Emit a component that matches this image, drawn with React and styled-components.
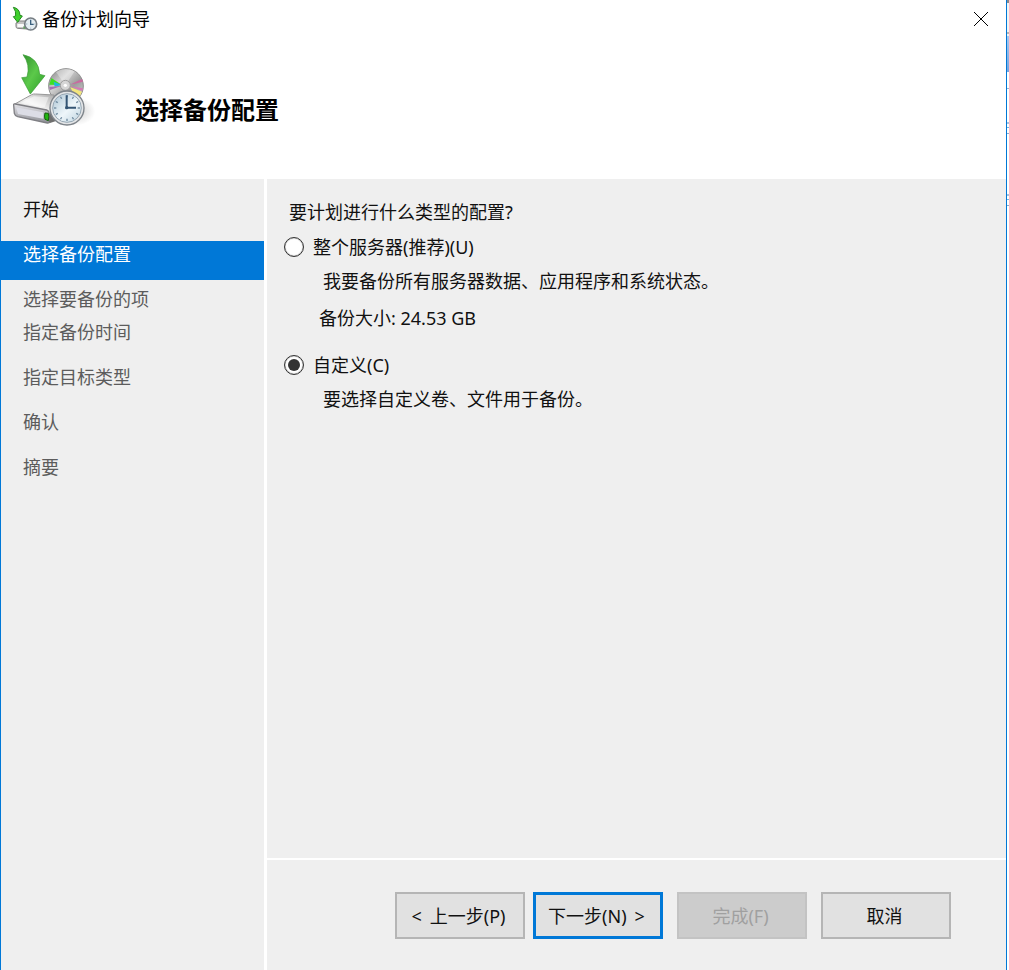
import React, { useState } from 'react';
import styled, { createGlobalStyle, css } from 'styled-components';

const GlobalStyle = createGlobalStyle`
  :root {
    --accent: #0078d7;
    --panel: #efefef;
    --ink: #111;
    --muted: #5c5c5c;
    --font: 'Noto Sans', 'Noto Sans CJK SC', sans-serif;
  }

  *,
  *::before,
  *::after {
    box-sizing: border-box;
  }

  body {
    margin: 0;
    background: #fff;
    color: var(--ink);
    font-family: var(--font);
    font-size: 18px;
    line-height: 24px;
  }
`;

const Desktop = styled.div`
  display: flex;
  min-height: 100vh;
`;

// Sliver of the window behind the wizard
const Backdrop = styled.div`
  width: 2px;
  background: linear-gradient(
    #8a8a8a 0 3px,
    #f3f3f3 3px 32px,
    #b4b4b4 32px 34px,
    #f3f3f3 34px 36px,
    #a9c8ef 36px,
    #77a5e0 72px,
    #fff 72px 88px,
    #9db4cf 88px 89px,
    #fff 89px 122px,
    #a9c2de 122px 124px,
    #fff 124px 127px,
    #79b4dc 127px 128px,
    #fff 128px 133px,
    #8ba9cc 133px 134px,
    #fff 134px 194px,
    #a9c2de 194px 196px,
    #fff 196px 199px,
    #79b4dc 199px 200px,
    #fff 200px 205px,
    #8ba9cc 205px 206px,
    #fff 206px
  );
`;

const Window = styled.div`
  display: flex;
  flex: 1;
  flex-direction: column;
  border: solid var(--accent);
  border-width: 0 1px;
`;

const TitleBar = styled.div`
  display: flex;
  align-items: center;
  gap: 4px;
  height: 37px;
  padding: 0 16px 0 11px;
  color: #000;
`;

const TitleText = styled.span`
  flex: 1;
`;

const CloseButton = styled.button`
  display: flex;
  padding: 0;
  border: 0;
  background: none;
  color: #000;
`;

const Header = styled.header`
  display: flex;
  align-items: flex-start;
  gap: 39px;
  height: 142px;
  padding: 15px 11px 0;

  h1 {
    margin: 40px 0 0;
    color: #000;
    font-size: 24px;
    font-weight: 700;
    line-height: 36px;
  }
`;

const Body = styled.div`
  display: flex;
  flex: 1;
  gap: 3px;
`;

const Sidebar = styled.nav`
  flex: 0 0 263px;
  padding-top: 17px;
  background: var(--panel);

  ul {
    display: flex;
    flex-direction: column;
    gap: 6px;
    margin: 0;
    padding: 0;
    list-style: none;
  }
`;

const Step = styled.a`
  display: block;
  padding: 1px 22px ${({ $tight }) => ($tight ? '2px' : '14px')};
  color: ${({ $state }) => ($state === 'done' ? 'var(--ink)' : 'var(--muted)')};
  text-decoration: none;

  ${({ $state }) =>
    $state === 'current' &&
    css`
      background: var(--accent);
      color: #fff;
    `}
`;

const Main = styled.main`
  display: flex;
  flex: 1;
  flex-direction: column;
  background: var(--panel);
`;

const Options = styled.fieldset`
  flex: 1;
  min-width: 0;
  margin: 0;
  padding: 21px 17px 0;
  border: 0;

  legend {
    float: left;
    width: 100%;
    margin-bottom: 11px;
    padding: 0 5px;
  }
`;

const Option = styled.div`
  clear: both;
  margin-bottom: 23px;

  label {
    display: flex;
    align-items: center;
    gap: 9px;
  }

  p {
    margin: 10px 0 0;
    padding-left: 39px;
  }

  p + p {
    margin-top: 13px;
    padding-left: 35px;
  }
`;

const Radio = styled.input`
  display: grid;
  place-content: center;
  width: 20px;
  height: 20px;
  margin: 0;
  border: 1px solid #333;
  border-radius: 50%;
  background: #fff;
  box-shadow: inset 0 0 1px #333;
  appearance: none;

  &:checked::before {
    width: 12px;
    height: 12px;
    border-radius: 50%;
    background: #333;
    content: '';
  }
`;

const Footer = styled.footer`
  display: flex;
  justify-content: flex-end;
  gap: 14px;
  padding: 32px 55px 31px 16px;
  border-top: 2px solid #fff;
`;

const Button = styled.button`
  display: flex;
  align-items: center;
  justify-content: center;
  gap: 8px;
  width: 130px;
  height: 47px;
  padding: 0 3px 0 0;
  border: ${({ $primary }) => ($primary ? '3px solid var(--accent)' : '2px solid #b5b5b5')};
  background: #e1e1e1;
  color: var(--ink);
  font: inherit;

  &:first-child {
    margin-right: -6px;
  }

  &:disabled {
    border-color: #c3c3c3;
    background: #ccc;
    color: #a0a0a0;
  }
`;

const BackupIcon = () => (
  <svg width="84" height="76" viewBox="38 38 252 228" aria-hidden="true">
    <defs>
      <linearGradient id="arrow" x1="0" y1="0" x2="1" y2="1">
        <stop offset="0" stopColor="#2f8f2c" />
        <stop offset="0.5" stopColor="#5cc94a" />
        <stop offset="1" stopColor="#2b9c28" />
      </linearGradient>
      <linearGradient id="disc" x1="0" y1="0" x2="1" y2="1">
        <stop offset="0" stopColor="#7c7c7c" />
        <stop offset="0.35" stopColor="#d2d2d2" />
        <stop offset="0.6" stopColor="#9c9c9c" />
        <stop offset="1" stopColor="#dcdcdc" />
      </linearGradient>
      <linearGradient id="driveTop" x1="0" y1="1" x2="1" y2="0">
        <stop offset="0" stopColor="#c0c0c0" />
        <stop offset="0.5" stopColor="#f2f2f2" />
        <stop offset="1" stopColor="#aaa" />
      </linearGradient>
      <linearGradient id="driveFront" x1="0" y1="0" x2="0" y2="1">
        <stop offset="0" stopColor="#e4e4e8" />
        <stop offset="1" stopColor="#8e8f96" />
      </linearGradient>
      <linearGradient id="face" x1="0" y1="0" x2="1" y2="1">
        <stop offset="0" stopColor="#aac3d3" />
        <stop offset="0.55" stopColor="#eef6fa" />
        <stop offset="1" stopColor="#bed3df" />
      </linearGradient>
      <radialGradient id="shade">
        <stop offset="0" stopColor="#bbb" stopOpacity="0.7" />
        <stop offset="1" stopColor="#bbb" stopOpacity="0" />
      </radialGradient>
    </defs>
    <ellipse cx="232" cy="216" rx="56" ry="42" fill="url(#shade)" />
    <circle cx="200" cy="140" r="52" fill="url(#disc)" stroke="#8e8e8e" strokeWidth="3" />
    <path d="M198 138L170 98A52 52 0 0 1 226 96Z" fill="#fff" opacity="0.35" />
    <path d="M188 137L150 136L156 116Z" fill="#3fe022" />
    <path d="M188 137L166 142L163 127Z" fill="#1fb9dd" />
    <path d="M188 139L152 152L150 143Z" fill="#a66fb4" />
    <path d="M210 137L248 119L251 127Z" fill="#c9699f" />
    <path d="M210 140L251 147L249 155Z" fill="#d679b4" />
    <path d="M212 143L248 157L240 174L226 166Z" fill="#f4e67c" />
    <circle cx="198" cy="138" r="15" fill="#d6d6d6" stroke="#9d9d9d" strokeWidth="3" />
    <circle cx="198" cy="138" r="5" fill="#fff" />
    <path d="M43 196L97 166Q102 163 109 164L164 167L162 220L146 224Z" fill="url(#driveTop)" stroke="#999" strokeWidth="3" />
    <path d="M62 192L104 171L148 174L136 204Z" fill="#fff" opacity="0.5" />
    <path d="M43 197Q42 193 48 194L142 212Q148 214 149 220L151 242Q151 252 144 251L55 232Q47 230 45 222Z" fill="url(#driveFront)" stroke="#7f7f84" strokeWidth="4" />
    <path d="M50 204L132 219V238L56 224Z" fill="#dcdde6" />
    <path d="M150 223L167 218L170 245L150 252Z" fill="#6f6f6f" />
    <path d="M137 221L147 222Q150 232 147 244L137 240Q134 230 137 221Z" fill="#22b612" stroke="#15600c" strokeWidth="3" />
    <circle cx="203" cy="206" r="51" fill="#e2e4e6" stroke="#7e848a" strokeWidth="4" />
    <circle cx="203" cy="206" r="43" fill="url(#face)" stroke="#98a8b4" strokeWidth="3" />
    <g stroke="#6d889d" strokeWidth="4">
      {[0, 30, 60, 90, 120, 150, 180, 210, 240, 270, 300, 330].map(angle => (
        <path key={angle} d="M203 167V174" transform={`rotate(${angle} 203 206)`} />
      ))}
    </g>
    <path d="M202 168V206M202 205H230" fill="none" stroke="#345574" strokeWidth="6" />
    <circle cx="202" cy="205" r="5" fill="#345574" />
    <path
      d="M71 46Q118 55 121 105L137 109L93 164L67 115L83 113Q94 76 71 46Z"
      fill="url(#arrow)"
      stroke="#3b9b37"
      strokeWidth="2"
      strokeLinejoin="round"
    />
  </svg>
);

const TitleIcon = () => (
  <svg width="26" height="26" viewBox="36 15 78 78" aria-hidden="true">
    <path d="M48 66L58 60H82V84L52 82Q48 81 48 76Z" fill="#c4c4c4" stroke="#828282" strokeWidth="3" />
    <path d="M52 69H76V78H52Z" fill="#fafafa" />
    <path d="M70 76H77V83H70Z" fill="#5da35b" />
    <circle cx="92" cy="69" r="18" fill="#e4edf2" stroke="#767d83" strokeWidth="5" />
    <path d="M92 56V70H101" fill="none" stroke="#3b617f" strokeWidth="4" />
    <path d="M78 69H82M92 80V83M103 69H106" stroke="#7490a4" strokeWidth="2" />
    <path d="M40 19Q59 22 60 43L67 45L53 64L40 47L47 45Q49 31 40 19Z" fill="#3fd02c" stroke="#258a20" strokeWidth="3" />
  </svg>
);

const steps = [
  { label: '开始', state: 'done' },
  { label: '选择备份配置', state: 'current' },
  { label: '选择要备份的项', tight: true },
  { label: '指定备份时间' },
  { label: '指定目标类型' },
  { label: '确认' },
  { label: '摘要' },
];

const options = [
  {
    id: 'full',
    label: '整个服务器(推荐)(U)',
    notes: ['我要备份所有服务器数据、应用程序和系统状态。', '备份大小: 24.53 GB'],
  },
  { id: 'custom', label: '自定义(C)', notes: ['要选择自定义卷、文件用于备份。'] },
];

export default function App() {
  const [selected, setSelected] = useState('custom');

  return (
    <>
      <GlobalStyle />
      <Desktop>
        <Window>
          <TitleBar>
            <TitleIcon />
            <TitleText>备份计划向导</TitleText>
            <CloseButton type="button" aria-label="关闭">
              <svg width="18" height="18" viewBox="0 0 18 18" aria-hidden="true">
                <path d="M2 2L16 16M16 2L2 16" stroke="currentColor" />
              </svg>
            </CloseButton>
          </TitleBar>

          <Header>
            <BackupIcon />
            <h1>选择备份配置</h1>
          </Header>

          <Body>
            <Sidebar>
              <ul>
                {steps.map(({ label, state, tight }) => (
                  <li key={label}>
                    <Step
                      href="#"
                      $state={state}
                      $tight={tight}
                      aria-current={state === 'current' ? 'step' : undefined}>
                      {label}
                    </Step>
                  </li>
                ))}
              </ul>
            </Sidebar>

            <Main>
              <Options>
                <legend>要计划进行什么类型的配置?</legend>
                {options.map(({ id, label, notes }) => (
                  <Option key={id}>
                    <label htmlFor={id}>
                      <Radio
                        type="radio"
                        id={id}
                        name="config"
                        checked={selected === id}
                        onChange={() => setSelected(id)}
                      />
                      {label}
                    </label>
                    {notes.map(note => (
                      <p key={note}>{note}</p>
                    ))}
                  </Option>
                ))}
              </Options>

              <Footer>
                <Button type="button">
                  <span>&lt;</span> <span>上一步(P)</span>
                </Button>
                <Button type="button" $primary>
                  <span>下一步(N)</span> <span>&gt;</span>
                </Button>
                <Button type="button" disabled>
                  完成(F)
                </Button>
                <Button type="button">取消</Button>
              </Footer>
            </Main>
          </Body>
        </Window>
        <Backdrop />
      </Desktop>
    </>
  );
}
